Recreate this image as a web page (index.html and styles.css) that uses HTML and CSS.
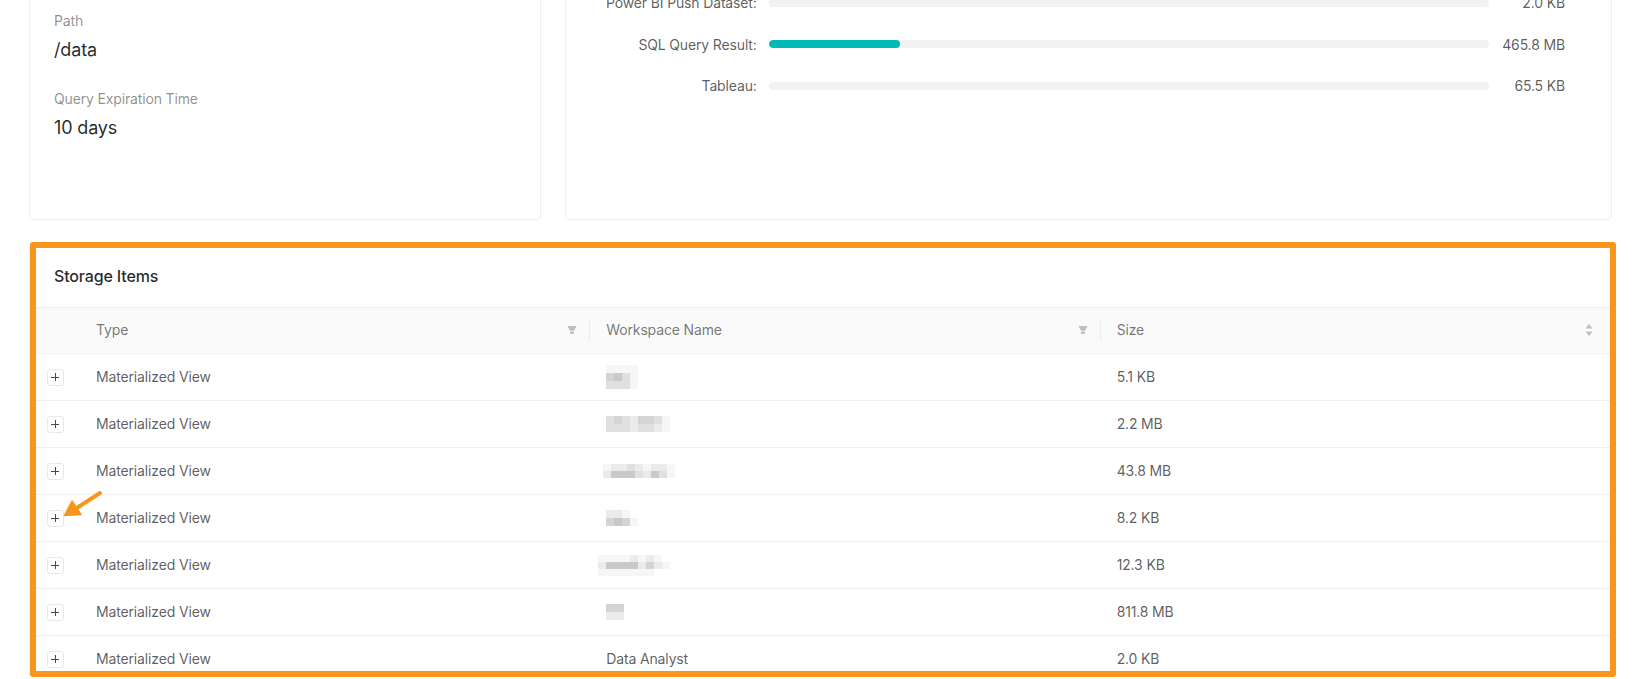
FILE: index.html
```html
<!DOCTYPE html>
<html lang="en">
<head>
<meta charset="utf-8">
<title>Storage</title>
<link rel="stylesheet" href="styles.css">
</head>
<body>
<div class="page">
  <div class="stats-row">
    <section class="card info-card">
      <div class="field">
        <div class="label">Path</div>
        <div class="value">/data</div>
      </div>
      <div class="field">
        <div class="label">Query Expiration Time</div>
        <div class="value">10 days</div>
      </div>
    </section>
    <section class="card usage-card">
      <div class="usage-row">
        <div class="usage-label">Power BI Push Dataset:</div>
        <div class="bar"><div class="bar-fill" style="width:0%"></div></div>
        <div class="usage-value">2.0 KB</div>
      </div>
      <div class="usage-row">
        <div class="usage-label">SQL Query Result:</div>
        <div class="bar"><div class="bar-fill" style="width:18.3%"></div></div>
        <div class="usage-value">465.8 MB</div>
      </div>
      <div class="usage-row">
        <div class="usage-label">Tableau:</div>
        <div class="bar"><div class="bar-fill" style="width:0%"></div></div>
        <div class="usage-value">65.5 KB</div>
      </div>
    </section>
  </div>

  <section class="card storage-card">
    <div class="card-head">Storage Items</div>
    <div class="table">
      <div class="t-head">
        <div class="th th-expand"></div>
        <div class="th">
          <span class="th-title">Type</span>
          <span class="th-icon"><svg class="filter-icon" viewBox="64 64 896 896" width="10" height="10"><path d="M349 838c0 17.7 14.2 32 31.8 32h262.4c17.6 0 31.8-14.3 31.8-32V642H349v196zm531.1-684H143.9c-24.5 0-39.8 26.7-27.5 48l221.3 376h348.8l221.3-376c12.1-21.3-3.2-48-27.7-48z"/></svg></span>
          <span class="th-divider"></span>
        </div>
        <div class="th">
          <span class="th-title">Workspace Name</span>
          <span class="th-icon"><svg class="filter-icon" viewBox="64 64 896 896" width="10" height="10"><path d="M349 838c0 17.7 14.2 32 31.8 32h262.4c17.6 0 31.8-14.3 31.8-32V642H349v196zm531.1-684H143.9c-24.5 0-39.8 26.7-27.5 48l221.3 376h348.8l221.3-376c12.1-21.3-3.2-48-27.7-48z"/></svg></span>
          <span class="th-divider"></span>
        </div>
        <div class="th th-last">
          <span class="th-title">Size</span>
          <span class="th-icon sort-icon"><svg viewBox="0 0 8 14" width="8" height="14"><path d="M4 1 L7.5 5.5 H0.5 Z"/><path d="M4 13 L7.5 8.5 H0.5 Z"/></svg></span>
        </div>
      </div>

      <div class="t-row">
        <div class="td td-expand"><span class="expand-btn"></span></div>
        <div class="td">Materialized View</div>
        <div class="td">
          <div class="blur cols-5">
            <i class="s6"></i><i class="s6"></i><i class="s6"></i><i class="s6"></i><i class="s0"></i>
            <i class="s3"></i><i class="s2"></i><i class="s4"></i><i class="s6"></i><i class="s0"></i>
            <i class="s4"></i><i class="s4"></i><i class="s4"></i><i class="s6"></i><i class="s0"></i>
          </div>
        </div>
        <div class="td">5.1 KB</div>
      </div>

      <div class="t-row">
        <div class="td td-expand"><span class="expand-btn"></span></div>
        <div class="td">Materialized View</div>
        <div class="td">
          <div class="blur cols-8">
            <i class="s4"></i><i class="s3"></i><i class="s4"></i><i class="s5"></i><i class="s3"></i><i class="s3"></i><i class="s4"></i><i class="s6"></i>
            <i class="s4"></i><i class="s4"></i><i class="s4"></i><i class="s5"></i><i class="s4"></i><i class="s4"></i><i class="s5"></i><i class="s6"></i>
          </div>
        </div>
        <div class="td">2.2 MB</div>
      </div>

      <div class="t-row">
        <div class="td td-expand"><span class="expand-btn"></span></div>
        <div class="td">Materialized View</div>
        <div class="td">
          <div class="blur cols-9 thin shift-l">
            <i class="s6"></i><i class="s5"></i><i class="s5"></i><i class="s4"></i><i class="s5"></i><i class="s6"></i><i class="s5"></i><i class="s5"></i><i class="s6"></i>
            <i class="s5"></i><i class="s2"></i><i class="s2"></i><i class="s2"></i><i class="s4"></i><i class="s5"></i><i class="s2"></i><i class="s4"></i><i class="s6"></i>
          </div>
        </div>
        <div class="td">43.8 MB</div>
      </div>

      <div class="t-row">
        <div class="td td-expand"><span class="expand-btn"></span></div>
        <div class="td">Materialized View</div>
        <div class="td">
          <div class="blur cols-4">
            <i class="s5"></i><i class="s5"></i><i class="s6"></i><i class="s0"></i>
            <i class="s3"></i><i class="s2"></i><i class="s3"></i><i class="s6"></i>
          </div>
        </div>
        <div class="td">8.2 KB</div>
      </div>

      <div class="t-row">
        <div class="td td-expand"><span class="expand-btn"></span></div>
        <div class="td">Materialized View</div>
        <div class="td">
          <div class="blur cols-9 thin shift-l2">
            <i class="s6"></i><i class="s6"></i><i class="s6"></i><i class="s6"></i><i class="s5"></i><i class="s6"></i><i class="s5"></i><i class="s6"></i><i class="s0"></i>
            <i class="s5"></i><i class="s2"></i><i class="s2"></i><i class="s2"></i><i class="s2"></i><i class="s5"></i><i class="s3"></i><i class="s5"></i><i class="s6"></i>
            <i class="s6"></i><i class="s6"></i><i class="s6"></i><i class="s6"></i><i class="s6"></i><i class="s6"></i><i class="s6"></i><i class="s0"></i><i class="s0"></i>
          </div>
        </div>
        <div class="td">12.3 KB</div>
      </div>

      <div class="t-row">
        <div class="td td-expand"><span class="expand-btn"></span></div>
        <div class="td">Materialized View</div>
        <div class="td">
          <div class="blur cols-2">
            <i class="s3"></i><i class="s3"></i>
            <i class="s5"></i><i class="s5"></i>
          </div>
        </div>
        <div class="td">811.8 MB</div>
      </div>

      <div class="t-row">
        <div class="td td-expand"><span class="expand-btn"></span></div>
        <div class="td">Materialized View</div>
        <div class="td">Data Analyst</div>
        <div class="td">2.0 KB</div>
      </div>
    </div>

    <div class="highlight"></div>
    <svg class="arrow" viewBox="0 0 46 34" width="46" height="34">
      <line x1="40" y1="6" x2="16" y2="21.5" stroke="#f7951d" stroke-width="4" stroke-linecap="round"/>
      <polygon points="4.5,28.5 21,27.5 12,14" fill="#f7951d" stroke="#f7951d" stroke-width="1.5" stroke-linejoin="round"/>
    </svg>
  </section>
</div>
</body>
</html>
```

FILE: styles.css
```css
* { box-sizing: border-box; }

body {
  margin: 0;
  background: #ffffff;
  font-family: Inter, "Noto Sans", "Liberation Sans", sans-serif;
  font-size: 14px;
  letter-spacing: -0.15px;
  color: rgba(0, 0, 0, 0.85);
  overflow: hidden;
}

.page {
  margin-top: -29px;
  padding: 0 33px 0 29px;
}

.card {
  background: #ffffff;
  border: 1px solid #f0f0f0;
  border-radius: 4px;
}

/* top row */
.stats-row {
  display: grid;
  grid-template-columns: calc((100% + 24px) / 3 - 24px) 1fr;
  column-gap: 24px;
  margin-bottom: 24px;
}

.info-card {
  padding: 38px 24px 24px;
}

.field + .field {
  margin-top: 24px;
}

.label {
  font-size: 14px;
  line-height: 22px;
  color: rgba(0, 0, 0, 0.45);
}

.value {
  margin-top: 4px;
  font-size: 18px;
  line-height: 28px;
  color: rgba(0, 0, 0, 0.85);
}

.usage-card {
  padding: 10px 46px 112px 24px;
}

.usage-row {
  display: flex;
  align-items: center;
  height: 41.5px;
  color: rgba(0, 0, 0, 0.65);
}

.usage-label {
  width: 167px;
  text-align: right;
  white-space: nowrap;
}

.bar {
  flex: 1;
  height: 8px;
  margin-left: 12px;
  border-radius: 100px;
  background: #f2f2f2;
  overflow: hidden;
}

.bar-fill {
  height: 100%;
  border-radius: 100px;
  background: #00b9b9;
}

.usage-value {
  width: 76px;
  text-align: right;
  white-space: nowrap;
}

/* storage card */
.storage-card {
  position: relative;
}

.card-head {
  display: flex;
  align-items: center;
  height: 63px;
  padding: 0 24px;
  font-size: 16px;
  font-weight: 500;
  color: rgba(0, 0, 0, 0.85);
  border-bottom: 1px solid #f0f0f0;
}

.t-head,
.t-row {
  display: grid;
  grid-template-columns: 50px 1fr 1fr 1fr;
}

.t-head {
  height: 46px;
  background: #fafafa;
  border-bottom: 1px solid #f0f0f0;
}

.th {
  display: flex;
  align-items: center;
  padding-left: 16px;
  color: rgba(0, 0, 0, 0.55);
  line-height: 22px;
}

.th-title {
  flex: 1;
}

.th-icon {
  display: flex;
  align-items: center;
  justify-content: center;
  width: 24px;
  height: 24px;
  margin-right: 5px;
  fill: #bfbfbf;
}

.sort-icon {
  margin-right: 10px;
}

.th-divider {
  width: 1px;
  height: 22px;
  background: #ececec;
}

.t-row {
  height: 47px;
  border-bottom: 1px solid #f0f0f0;
}

.td {
  display: flex;
  align-items: center;
  padding-left: 16px;
  padding-top: 1px;
  line-height: 22px;
  color: rgba(0, 0, 0, 0.65);
}

.td-expand {
  justify-content: center;
  padding-left: 0;
}

.expand-btn {
  position: relative;
  display: block;
  width: 17px;
  height: 17px;
  border: 1px solid #e8e8e8;
  border-radius: 3px;
  background: #ffffff;
}

.expand-btn::before,
.expand-btn::after {
  content: "";
  position: absolute;
  background: #4a4a4a;
}

.expand-btn::before {
  left: 3.5px;
  right: 3.5px;
  top: 7px;
  height: 1px;
}

.expand-btn::after {
  top: 3.5px;
  bottom: 3.5px;
  left: 7px;
  width: 1px;
}

/* pixelated (redacted) names */
.blur {
  display: grid;
  grid-auto-rows: 8px;
}

.blur.thin {
  grid-auto-rows: 7px;
}

.shift-l { margin-left: -3px; }
.shift-l2 { margin-left: -8px; }

.cols-2 { grid-template-columns: repeat(2, 9px); }
.cols-4 { grid-template-columns: repeat(4, 8px); }
.cols-5 { grid-template-columns: repeat(5, 8px); }
.cols-8 { grid-template-columns: repeat(8, 8px); }
.cols-9 { grid-template-columns: repeat(9, 8px); }

.blur i { display: block; }
.s0 { background: transparent; }
.s1 { background: #bdbdbd; }
.s2 { background: #c9c9c9; }
.s3 { background: #d4d4d4; }
.s4 { background: #e0e0e0; }
.s5 { background: #ebebeb; }
.s6 { background: #f6f6f6; }

/* annotation overlay */
.highlight {
  position: absolute;
  top: -3px;
  left: 0;
  width: calc(100% + 5px);
  height: 435px;
  border: 6px solid #f7951d;
  border-radius: 3px;
  pointer-events: none;
}

.arrow {
  position: absolute;
  left: 30px;
  top: 242px;
  overflow: visible;
}
```
